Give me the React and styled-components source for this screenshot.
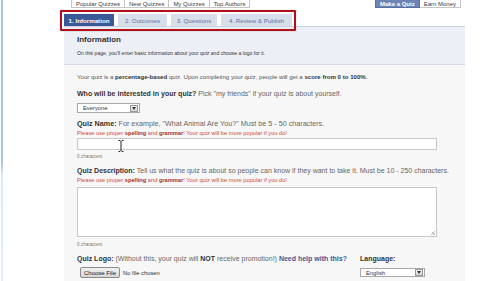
import React from 'react';
import styled, { createGlobalStyle } from 'styled-components';

const GlobalStyle = createGlobalStyle`
  html, body {
    margin: 0;
    padding: 0;
    background: #fff;
  }
  body {
    font-family: "Liberation Sans", Arial, sans-serif;
    color: #333;
  }
`;

const Screen = styled.div`
  position: relative;
  width: 499px;
  height: 281px;
  overflow: hidden;
  background: #fff;
  display: flex;
`;

const WindowEdge = styled.div`
  width: 2px;
  margin-left: 1px;
  flex-shrink: 0;
  background: linear-gradient(to bottom, #a9c4e4 0%, #a9c4e4 58%, #dde8f4 62%, #e6eef7 100%);
`;

const Main = styled.div`
  margin-left: 61px;
  width: 401px;
  flex-shrink: 0;
  background: #f7f7f7;
  display: flex;
  flex-direction: column;
`;

const TopNav = styled.div`
  display: flex;
  justify-content: space-between;
  align-items: flex-end;
  height: 8px;
  padding: 0 4px 0 7px;
  background: #fff;
`;

const NavGroup = styled.div`
  display: flex;
  height: 12px;
  margin-top: -4px;
`;

const NavTab = styled.div`
  height: 12px;
  box-sizing: border-box;
  padding: 4px 4px 0;
  border: 1px solid #c4c4c4;
  border-left-width: ${p => (p.$first ? '1px' : '0')};
  background: ${p => (p.$active ? '#6d84b4' : '#fff')};
  color: ${p => (p.$active ? '#fff' : '#3a3a3a')};
  border-color: ${p => (p.$active ? '#5a70a0' : '#c4c4c4')};
  font-size: 6px;
  line-height: 7px;
  font-weight: ${p => (p.$active ? 'bold' : 'normal')};
  white-space: nowrap;
`;

const StepRow = styled.div`
  position: relative;
  display: flex;
  gap: 4px;
  padding-top: 6px;
  height: 12px;
  background: #fff;
`;

const StepTab = styled.div`
  width: ${p => p.$w}px;
  height: 12px;
  box-sizing: border-box;
  display: flex;
  align-items: center;
  justify-content: center;
  background: ${p => (p.$active ? '#3b5998' : '#d8dfea')};
  color: ${p => (p.$active ? '#fff' : '#5872a7')};
  font-size: 6.2px;
  font-weight: ${p => (p.$active ? 'bold' : 'normal')};
  white-space: nowrap;
`;

const Highlight = styled.div`
  position: absolute;
  left: -4px;
  top: 2px;
  width: 236px;
  height: 21px;
  box-sizing: border-box;
  border: 2px solid #b0101a;
  border-radius: 1px;
  box-shadow: 0 0 1px rgba(120, 0, 0, 0.6);
  z-index: 2;
`;

const InfoBox = styled.div`
  background: #eceff6;
  border-top: 1px solid #c9d1e2;
  border-bottom: 1px solid #d6dbe6;
  padding: 8px 13px 7px;
`;

const InfoTitle = styled.div`
  font-size: 8px;
  line-height: 10px;
  font-weight: bold;
  color: #333;
`;

const InfoText = styled.div`
  margin-top: 4px;
  font-size: 5.1px;
  line-height: 8px;
  color: #333;
`;

const Form = styled.div`
  position: relative;
  padding: 0 28px 0 13px;
  display: flex;
  flex-direction: column;
`;

const Line = styled.div`
  margin-top: ${p => p.$mt || 0}px;
  font-size: ${p => p.$size || 7}px;
  line-height: ${p => p.$lh || 9}px;
  color: ${p => p.$color || '#666'};
  white-space: nowrap;
`;

const Strong = styled.b`
  color: ${p => p.$color || '#333'};
`;

const Warn = styled(Line)`
  color: #d04a3c;
  b {
    color: #a8302a;
  }
`;

const SelectBox = styled.div`
  margin-top: ${p => p.$mt || 0}px;
  width: ${p => p.$w}px;
  height: ${p => p.$h || 10}px;
  box-sizing: border-box;
  display: flex;
  align-items: center;
  justify-content: space-between;
  padding: 0 1px 0 5px;
  background: #fff;
  border: 1px solid #a9a9a9;
  font-size: 5.8px;
  color: #333;
`;

const DropButton = styled.div`
  width: 8px;
  height: 7px;
  box-sizing: border-box;
  border: 1px solid #999;
  background: linear-gradient(#f4f4f4, #d8d8d8);
  display: flex;
  align-items: center;
  justify-content: center;
`;

const TextField = styled.div`
  margin-top: ${p => p.$mt || 0}px;
  height: ${p => p.$h}px;
  box-sizing: border-box;
  background: #fff;
  border: 1px solid #c8c8c8;
  position: relative;
`;

const ResizeGrip = styled.div`
  position: absolute;
  right: 1px;
  bottom: 1px;
  width: 5px;
  height: 5px;
  background: linear-gradient(135deg, transparent 50%, #bbb 50%, #bbb 62%, transparent 62%, transparent 75%, #bbb 75%);
`;

const Counter = styled.div`
  margin-top: ${p => p.$mt}px;
  font-size: 4.6px;
  line-height: 6px;
  color: #777;
`;

const LogoGrid = styled.div`
  margin-top: 6px;
  display: grid;
  grid-template-columns: 283px 1fr;
  row-gap: 4px;
  align-items: center;
`;

const FileRow = styled.div`
  display: flex;
  align-items: center;
  gap: 3px;
  font-size: 5.8px;
  color: #333;
`;

const FileButton = styled.div`
  height: 11px;
  box-sizing: border-box;
  margin-left: 3px;
  padding: 0 3px;
  display: flex;
  align-items: center;
  border: 1px solid #8a8a8a;
  border-radius: 2px;
  background: linear-gradient(#f2f2f2, #d6d6d6);
  font-size: 6px;
  color: #222;
`;

const Cursor = styled.svg`
  position: absolute;
  left: 54px;
  top: 75px;
`;

const Arrow = () => (
  <svg width="4" height="3" viewBox="0 0 4 3">
    <path d="M0 0 H4 L2 3 Z" fill="#333" />
  </svg>
);

export default function App() {
  return (
    <>
      <GlobalStyle />
      <Screen>
        <WindowEdge />
        <Main>
          <TopNav>
            <NavGroup>
              <NavTab $first>Popular Quizzes</NavTab>
              <NavTab>New Quizzes</NavTab>
              <NavTab>My Quizzes</NavTab>
              <NavTab>Top Authors</NavTab>
            </NavGroup>
            <NavGroup>
              <NavTab $first $active>Make a Quiz</NavTab>
              <NavTab>Earn Money</NavTab>
            </NavGroup>
          </TopNav>

          <StepRow>
            <StepTab $w={50} $active>1. Information</StepTab>
            <StepTab $w={49}>2. Outcomes</StepTab>
            <StepTab $w={46}>3. Questions</StepTab>
            <StepTab $w={71}>4. Review &amp; Publish</StepTab>
            <Highlight />
          </StepRow>

          <InfoBox>
            <InfoTitle>Information</InfoTitle>
            <InfoText>
              On this page, you'll enter basic information about your quiz and choose a logo for it.
            </InfoText>
          </InfoBox>

          <Form>
            <Line $mt={8} $size={6.1} $lh={8} $color="#555">
              Your quiz is a <Strong>percentage-based</Strong> quiz. Upon completing your quiz, people will get a{' '}
              <Strong>score from 0 to 100%</Strong>.
            </Line>
            <Line $mt={8} $lh={10}>
              <Strong>Who will be interested in your quiz?</Strong> Pick "my friends" if your quiz is about yourself.
            </Line>
            <SelectBox $mt={4} $w={63}>
              Everyone
              <DropButton><Arrow /></DropButton>
            </SelectBox>

            <Line $mt={6} $size={7.2}>
              <Strong>Quiz Name:</Strong> For example, "What Animal Are You?" Must be 5 - 50 characters.
            </Line>
            <Warn $mt={1} $size={5.7} $lh={8}>
              Please use proper <b>spelling</b> and <b>grammar</b>! Your quiz will be more popular if you do!
            </Warn>
            <TextField $mt={1} $h={12} />
            <Counter $mt={4}>0 characters</Counter>

            <Line $mt={6}>
              <Strong>Quiz Description:</Strong> Tell us what the quiz is about so people can know if they want to take it. Must be 10 - 250 characters.
            </Line>
            <Warn $mt={1} $size={5.7} $lh={8}>
              Please use proper <b>spelling</b> and <b>grammar</b>! Your quiz will be more popular if you do!
            </Warn>
            <TextField $mt={3} $h={50}>
              <ResizeGrip />
            </TextField>
            <Counter $mt={5}>0 characters</Counter>

            <LogoGrid>
              <Line>
                <Strong>Quiz Logo:</Strong> (Without this, your quiz will <Strong>NOT</Strong> receive promotion!){' '}
                <Strong $color="#3b5998">Need help with this?</Strong>
              </Line>
              <Line>
                <Strong>Language:</Strong>
              </Line>
              <FileRow>
                <FileButton>Choose File</FileButton>
                No file chosen
              </FileRow>
              <SelectBox $w={65} $h={9}>
                English
                <DropButton><Arrow /></DropButton>
              </SelectBox>
            </LogoGrid>

            <Cursor width="6" height="12" viewBox="0 0 6 12">
              <path d="M0.5 0.5 H2 L3 1.5 L4 0.5 H5.5 M3 1.5 V10.5 M0.5 11.5 H2 L3 10.5 L4 11.5 H5.5" stroke="#222" strokeWidth="1" fill="none" />
            </Cursor>
          </Form>
        </Main>
      </Screen>
    </>
  );
}
